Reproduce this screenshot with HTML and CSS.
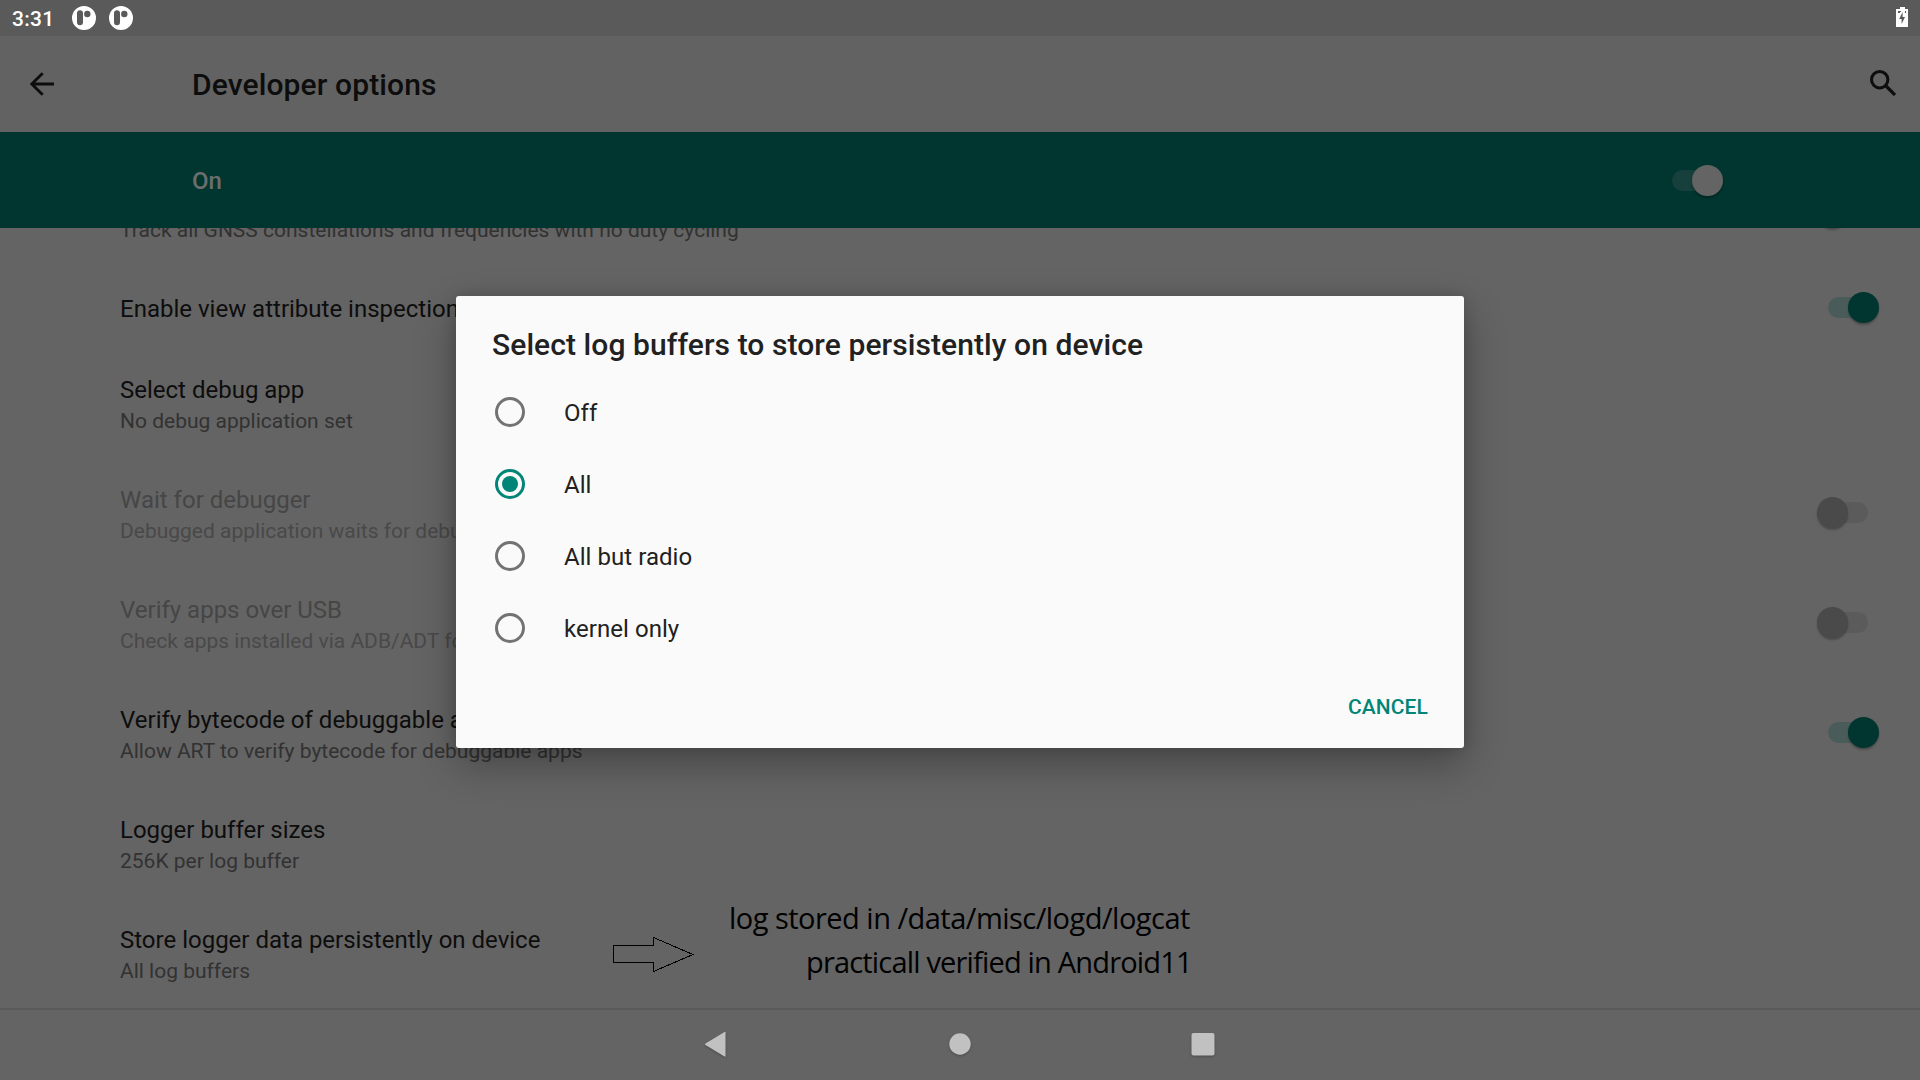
FILE: index.html
```html
<!DOCTYPE html>
<html lang="en">
<head>
<meta charset="utf-8">
<title>Developer options</title>
<link rel="stylesheet" href="styles.css">
</head>
<body>
<div class="screen">
  <header class="status">
    <span class="clock">3:31</span>
    <svg class="notif" viewBox="0 0 24 24"><path fill-rule="evenodd" fill="#fff" d="M12 0a12 12 0 1 1 0 24a12 12 0 0 1 0-24zM8 4.2a3 3 0 0 0-3 3v9a3 3 0 0 0 6 0v-9a3 3 0 0 0-3-3zM15.300 4.800a3.200 3.200 0 1 0 0 6.400a3.200 3.200 0 0 0 0-6.400z"/></svg>
    <svg class="notif" viewBox="0 0 24 24"><path fill-rule="evenodd" fill="#fff" d="M12 0a12 12 0 1 1 0 24a12 12 0 0 1 0-24zM8 4.2a3 3 0 0 0-3 3v9a3 3 0 0 0 6 0v-9a3 3 0 0 0-3-3zM15.300 4.800a3.200 3.200 0 1 0 0 6.400a3.200 3.200 0 0 0 0-6.400z"/></svg>
    <svg class="battery" viewBox="0 0 12 20"><path fill="#fff" d="M4 0h5v2h3v18H0V2h4z"/><path fill="#5a5a5a" d="M2 4h3v1H4v1H2zM9 4h1v2H9zM6.600 5v5H9l-3.400 7v-5H3.200z"/></svg>
  </header>

  <div class="toolbar">
    <svg class="back" viewBox="0 0 24 24"><path d="M12.700 1.200L1.700 12L12.700 22.800M1.700 12H24" fill="none" stroke="#0d0d0d" stroke-width="2.900"/></svg>
    <h1 class="heading">Developer options</h1>
    <svg class="search" viewBox="0 0 26 26"><circle cx="9.700" cy="9.700" r="8.200" fill="none" stroke="#0d0d0d" stroke-width="3"/><path d="M15.500 15.500L25 25" stroke="#0d0d0d" stroke-width="3.200"/></svg>
  </div>

  <div class="master">
    <span class="master-label">On</span>
    <span class="switch on light"></span>
  </div>

  <main class="list">
    <div class="row first">
      <div class="summary">Track all GNSS constellations and frequencies with no duty cycling</div>
      <span class="switch off"></span>
    </div>
    <div class="row single">
      <div class="texts"><div class="title">Enable view attribute inspection</div></div>
      <span class="switch on"></span>
    </div>
    <div class="row">
      <div class="texts"><div class="title">Select debug app</div><div class="summary">No debug application set</div></div>
    </div>
    <div class="row disabled">
      <div class="texts"><div class="title">Wait for debugger</div><div class="summary">Debugged application waits for debugger</div></div>
      <span class="switch off"></span>
    </div>
    <div class="row disabled">
      <div class="texts"><div class="title">Verify apps over USB</div><div class="summary">Check apps installed via ADB/ADT for</div></div>
      <span class="switch off"></span>
    </div>
    <div class="row">
      <div class="texts"><div class="title">Verify bytecode of debuggable apps</div><div class="summary">Allow ART to verify bytecode for debuggable apps</div></div>
      <span class="switch on"></span>
    </div>
    <div class="row">
      <div class="texts"><div class="title">Logger buffer sizes</div><div class="summary">256K per log buffer</div></div>
    </div>
    <div class="row">
      <div class="texts"><div class="title">Store logger data persistently on device</div><div class="summary">All log buffers</div></div>
    </div>
  </main>

  <nav class="navbar">
    <svg class="nav-icon" viewBox="0 0 30 30"><path d="M23.500 3.500v23.500q0 1-1 .5L3.500 16q-1-.8 0-1.500L22.500 3q1-.5 1 .5z" fill="#c1c1c1"/></svg>
    <svg class="nav-icon" viewBox="0 0 30 30"><circle cx="15" cy="15" r="10.700" fill="#c1c1c1"/></svg>
    <svg class="nav-icon" viewBox="0 0 30 30"><rect x="3.500" y="4" width="23" height="22.500" rx="2" fill="#c1c1c1"/></svg>
  </nav>

  <svg class="note-arrow" viewBox="0 0 82 36"><path d="M.5 8.500H40.500V.5L80 17.500L40.500 34.500V25.500H.5z" fill="none" stroke="#000" stroke-width="1" shape-rendering="crispEdges"/></svg>
  <div class="note">
    <div class="note-line one">log stored in /data/misc/logd/logcat</div>
    <div class="note-line two">practicall verified in Android11</div>
  </div>

  <section class="dialog" role="dialog">
    <h2 class="dialog-title">Select log buffers to store persistently on device</h2>
    <div class="option"><span class="radio"></span><span class="option-label">Off</span></div>
    <div class="option"><span class="radio checked"></span><span class="option-label">All</span></div>
    <div class="option"><span class="radio"></span><span class="option-label">All but radio</span></div>
    <div class="option"><span class="radio"></span><span class="option-label">kernel only</span></div>
    <div class="actions"><span class="cancel">CANCEL</span></div>
  </section>
</div>
</body>
</html>
```
FILE: styles.css
```css
* { box-sizing: border-box; }
body { margin: 0; font-family: Roboto, "Liberation Sans", sans-serif; }
.screen {
  position: relative;
  width: 1920px;
  height: 1080px;
  overflow: hidden;
  background: #646464;
  display: flex;
  flex-direction: column;
}
.status {
  height: 36px;
  flex: none;
  background: #5a5a5a;
  display: flex;
  align-items: center;
  padding: 0 12px;
  color: #fff;
}
.clock { font-size: 21px; font-weight: 500; letter-spacing: .3px; line-height: 36px; width: 60px; padding-top: 2px; }
.notif { width: 24px; height: 24px; margin-right: 13px; }
.battery { width: 12px; height: 20px; margin: 0 0 2px auto; }

.toolbar {
  height: 96px;
  flex: none;
  background: #626262;
  display: flex;
  align-items: center;
  padding: 0 24px 0 30px;
}
.back { width: 24px; height: 24px; }
.heading { margin: 0 auto 0 138px; padding-top: 2px; font-size: 30px; font-weight: 500; letter-spacing: .12px; line-height: 36px; color: #0d0d0d; }
.search { width: 26px; height: 26px; margin-bottom: 2px; }

.master {
  height: 96px;
  flex: none;
  background: #003530;
  display: flex;
  align-items: center;
  justify-content: space-between;
  padding: 0 197px 0 192px;
}
.master-label { padding-top: 2px; font-size: 24px; font-weight: 500; color: #6a6f6e; }

.switch {
  position: relative;
  width: 51px;
  height: 31px;
  flex: none;
  display: flex;
  align-items: center;
}
.switch::before { content: ""; width: 42px; height: 21px; border-radius: 11px; background: #4a5c5a; }
.switch::after {
  content: "";
  position: absolute;
  right: 0;
  top: 0;
  width: 31px;
  height: 31px;
  border-radius: 50%;
  background: #003530;
  box-shadow: 0 2px 2px rgba(0, 0, 0, .25);
}
.switch.light::before { background: #173f3b; }
.switch.light::after { background: #646464; }
.switch.off { justify-content: flex-end; margin-right: 11px; }
.switch.off::before { background: #5b5b5b; }
.switch.off::after { right: auto; left: 0; background: #4a4a4a; }

.list { height: 780px; flex: none; overflow: hidden; }
.row {
  height: 110px;
  display: flex;
  align-items: center;
  justify-content: space-between;
  padding: 0 41px 0 120px;
  white-space: nowrap;
}
.row .switch { margin-bottom: 1px; }
.row.first { height: 40px; align-items: flex-start; }
.row.first .summary { margin-top: -13px; }
.row.first .switch { margin-top: -31px; }
.row.single { height: 80px; }
.texts { padding-top: 4px; }
.single .texts { padding-top: 2px; }
.title { font-size: 24px; line-height: 32px; color: #0d0d0d; }
.summary { font-size: 21px; line-height: 30px; color: #323232; }
.disabled .title { color: #464646; }
.disabled .summary { color: #494949; }

.navbar {
  height: 72px;
  flex: none;
  border-top: 2px solid #5a5a5a;
  display: flex;
  justify-content: center;
  align-items: center;
  gap: 213px;
  padding-bottom: 2px;
}
.nav-icon { width: 30px; height: 30px; filter: drop-shadow(0 1px 1px rgba(0, 0, 0, .25)); }

.note-arrow { position: absolute; left: 613px; top: 937px; width: 82px; height: 36px; }
.note {
  position: absolute;
  left: 729px;
  top: 896px;
  width: 480px;
  font-family: "Open Sans", "Noto Sans", sans-serif;
  font-size: 29px;
  line-height: 44px;
  color: #000;
  white-space: nowrap;
}
.note-line.one { letter-spacing: -.52px; }
.note-line.two { padding-left: 77px; letter-spacing: -.82px; }

.dialog {
  position: absolute;
  left: 456px;
  top: 296px;
  width: 1008px;
  height: 452px;
  border-radius: 3px;
  background: #fafafa;
  box-shadow: 0 16px 40px rgba(0, 0, 0, .3), 0 0 14px rgba(0, 0, 0, .15);
  padding-top: 27px;
  color: #212121;
}
.dialog-title { margin: 0 0 9px; padding: 0 36px; font-size: 30px; font-weight: 500; letter-spacing: .08px; line-height: 44px; }
.option { height: 72px; display: flex; align-items: center; padding-left: 39px; gap: 39px; font-size: 24px; }
.option-label { padding-top: 2px; letter-spacing: .05px; }
.radio { width: 30px; height: 30px; border: 3px solid #737373; border-radius: 50%; display: grid; place-items: center; }
.radio.checked { border-color: #008577; }
.radio.checked::after { content: ""; width: 16px; height: 16px; border-radius: 50%; background: #008577; }
.actions { display: flex; justify-content: flex-end; padding: 30px 36px 0; }
.cancel { font-size: 21px; font-weight: 500; letter-spacing: .1px; line-height: 26px; color: #008577; }
```
